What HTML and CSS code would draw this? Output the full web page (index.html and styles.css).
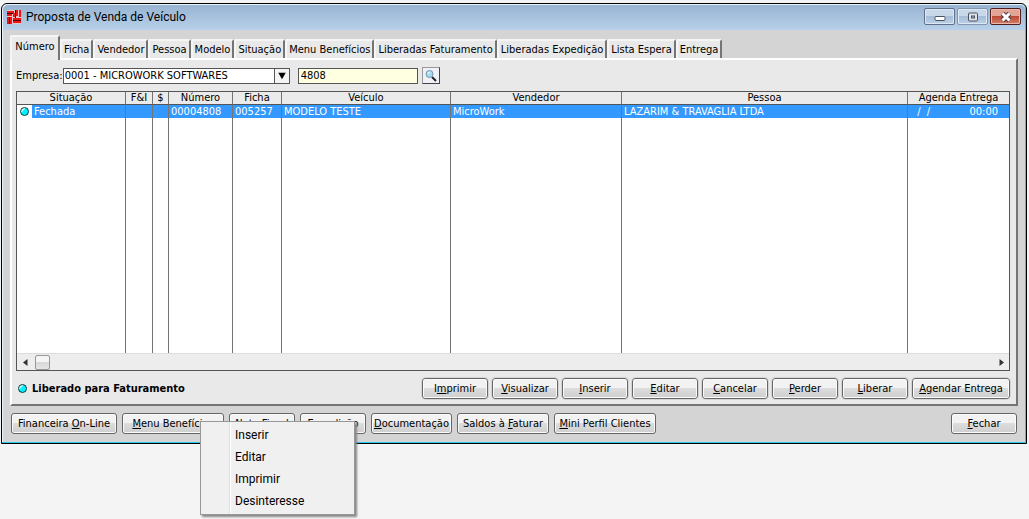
FILE: index.html
```html
<!DOCTYPE html>
<html lang="pt-BR">
<head>
<meta charset="utf-8">
<title>Proposta de Venda de Veículo</title>
<link rel="stylesheet" href="styles.css">
</head>
<body>
<main class="window">
  <header class="titlebar">
    <svg class="logo" viewBox="0 0 14 14" width="14" height="14" aria-hidden="true">
      <path fill="#e9c4c4" d="M0 0h14v14H0z"/>
      <path fill="#4a0808" d="M0 3h8v1H0zM8 0h1v8H8zM2 7h1v7H2zM6 10h8v1H6z"/>
      <path fill="#f01414" d="M0 1h7v2H0zM0 4h5v2H0zM6 3h2v4H6zM9 0h2v6H9zM12 0h2v7h-2zM0 7h2v7H0zM3 7h2v7H3zM6 8h8v2H6zM6 11h8v2H6z"/>
    </svg>
    <h1 class="title">Proposta de Venda de Veículo</h1>
    <div class="caption">
      <button class="cap" type="button" aria-label="Minimizar"><svg width="12" height="10" viewBox="0 0 12 10"><rect x="1" y="4.500" width="10" height="4" rx="1" fill="#fff" stroke="#4a5263"/></svg></button>
      <button class="cap cap-max" type="button" aria-label="Restaurar"><svg width="12" height="10" viewBox="0 0 12 10"><rect x="1.500" y="1" width="9" height="8" rx="1" fill="#dde2ea" stroke="#4a5263"/><rect x="4.500" y="4" width="3" height="2" fill="#a9c0da" stroke="#4a5263"/></svg></button>
      <button class="cap cap-close" type="button" aria-label="Fechar janela"><svg width="12" height="10" viewBox="0 0 12 10"><path d="M2.500 1.500l7 7M9.500 1.500l-7 7" stroke="#4e3c46" stroke-width="5"/><path d="M2.500 1.500l7 7M9.500 1.500l-7 7" stroke="#fff" stroke-width="3"/></svg></button>
    </div>
  </header>
  <div class="body">
    <nav class="tabs" aria-label="Filtros">
      <button class="tab tab-on w50" type="button">Número</button>
      <button class="tab" type="button">Ficha</button>
      <button class="tab" type="button">Vendedor</button>
      <button class="tab" type="button">Pessoa</button>
      <button class="tab" type="button">Modelo</button>
      <button class="tab" type="button">Situação</button>
      <button class="tab" type="button">Menu Benefícios</button>
      <button class="tab" type="button">Liberadas Faturamento</button>
      <button class="tab" type="button">Liberadas Expedição</button>
      <button class="tab" type="button">Lista Espera</button>
      <button class="tab" type="button">Entrega</button>
    </nav>
    <section class="panel">
      <form class="filter">
        <label for="empresa">Empresa:</label>
        <span class="combo">
          <select id="empresa"><option>0001 - MICROWORK SOFTWARES</option></select>
          <svg class="combo-arrow" width="15" height="15" viewBox="0 0 15 15" aria-hidden="true"><path d="M3.500 4h8l-4 7z" fill="#000"/></svg>
        </span>
        <input class="numero" type="text" value="4808" aria-label="Número">
        <button class="search" type="button" aria-label="Pesquisar"><svg width="14" height="14" viewBox="0 0 14 14"><path d="M8 8l4 4" stroke="#222" stroke-width="2"/><circle cx="5.500" cy="5" r="3.500" fill="#9fdcf0" stroke="#7d93a8"/><path d="M4 5a2 2 0 0 1 2-2" stroke="#fff" fill="none"/></svg></button>
      </form>
      <div class="grid">
        <table class="data">
          <colgroup><col class="c1"><col class="c2"><col class="c3"><col class="c4"><col class="c5"><col class="c6"><col class="c7"><col class="c8"><col class="c9"></colgroup>
          <thead><tr><th>Situação</th><th>F&amp;I</th><th>$</th><th>Número</th><th>Ficha</th><th>Veículo</th><th>Vendedor</th><th>Pessoa</th><th>Agenda Entrega</th></tr></thead>
          <tbody>
            <tr class="sel"><td class="state"><div class="state-in"><span class="dotcell"><i class="dot"></i></span>Fechada</div></td><td></td><td></td><td>00004808</td><td>005257</td><td>MODELO TESTE</td><td>MicroWork</td><td>LAZARIM &amp; TRAVAGLIA LTDA</td><td><div class="when"><span>&nbsp;/&nbsp; /</span><span>00:00</span></div></td></tr>
            <tr class="rest"><td></td><td></td><td></td><td></td><td></td><td></td><td></td><td></td><td></td></tr>
          </tbody>
        </table>
        <div class="scroll" aria-hidden="true">
          <svg width="5" height="7" viewBox="0 0 5 7"><path d="M4.500 0v7L0 3.500z" fill="#333"/></svg>
          <span class="thumb"></span>
          <svg class="right" width="5" height="7" viewBox="0 0 5 7"><path d="M.5 0v7L5 3.500z" fill="#333"/></svg>
        </div>
      </div>
      <div class="actions">
        <strong class="legend"><i class="dot"></i>Liberado para Faturamento</strong>
        <button class="btn" type="button">I<u>m</u>primir</button>
        <button class="btn" type="button"><u>V</u>isualizar</button>
        <button class="btn" type="button"><u>I</u>nserir</button>
        <button class="btn" type="button"><u>E</u>ditar</button>
        <button class="btn" type="button"><u>C</u>ancelar</button>
        <button class="btn" type="button"><u>P</u>erder</button>
        <button class="btn" type="button"><u>L</u>iberar</button>
        <button class="btn w98" type="button"><u>A</u>gendar Entrega</button>
      </div>
    </section>
    <footer class="footer">
      <button class="btn w106" type="button">Financeira <u>O</u>n-Line</button>
      <div class="menu-host">
        <button class="btn w102" type="button"><u>M</u>enu Benefícios</button>
        <div class="menu" role="menu">
          <button type="button" role="menuitem">Inserir</button>
          <button type="button" role="menuitem">Editar</button>
          <button type="button" role="menuitem">Imprimir</button>
          <button type="button" role="menuitem">Desinteresse</button>
        </div>
      </div>
      <button class="btn" type="button">Nota Fiscal</button>
      <button class="btn" type="button">Expedição</button>
      <button class="btn w81" type="button"><u>D</u>ocumentação</button>
      <button class="btn w92" type="button">Saldos à <u>F</u>aturar</button>
      <button class="btn w102" type="button"><u>M</u>ini Perfil Clientes</button>
      <button class="btn last" type="button"><u>F</u>echar</button>
    </footer>
  </div>
</main>
</body>
</html>
```
FILE: styles.css
```css
* { box-sizing: border-box; }
body {
  margin: 0;
  min-height: 100vh;
  padding: 3px 2px 0 1px;
  background: #f4f4f4;
  color: #000;
  font: 11px/13px "DejaVu Sans Condensed", "DejaVu Sans", sans-serif;
}
button, input, select { font: inherit; color: inherit; margin: 0; }
button { padding: 0; white-space: nowrap; }
.window {
  border: 1px solid #000;
  border-radius: 6px 6px 0 0;
  background: #d4d4d4;
  box-shadow: inset -1px -1px #27c8ec, inset 1px 1px #e8f4fc;
}
.titlebar {
  display: flex;
  align-items: center;
  gap: 5px;
  height: 25px;
  margin: 1px 1px 0;
  padding: 0 4px 2px;
  border-radius: 5px 5px 0 0;
  background: linear-gradient(#98b4d2, #b8d0e9);
}
.title { flex: 1; margin: 0; font: 12px/16px Roboto, sans-serif; }
.caption { display: flex; gap: 2px; }
.cap {
  display: grid;
  place-items: center;
  width: 31px;
  height: 17px;
  border: 1px solid #5f718a;
  border-radius: 2px;
  background: linear-gradient(#c9d8e9 45%, #a5bdd8 50%, #bdd1e6);
  box-shadow: inset 0 0 0 1px #dce8f4;
}
.cap-max { border-color: #8296b0; }
.cap-close {
  border-color: #521e1e;
  background: linear-gradient(#e3a496 45%, #b94a35 50%, #d58067);
  box-shadow: inset 0 0 0 1px #e9b9ae;
}
.body { padding: 5px 8px 9px; }
.tabs { display: flex; align-items: flex-end; height: 23px; }
.tab {
  height: 19px;
  padding: 0 2px;
  border: 0;
  border-left: 2px solid #f5f5f5;
  border-right: 2px solid #747474;
  border-top: 2px solid #f5f5f5;
  border-radius: 2px 2px 0 0;
  background: #e9e9e9;
}
.tab-on { position: relative; height: 25px; margin-bottom: -2px; padding: 0 0 5px; }
.w50 { width: 50px; }
.panel {
  padding: 7px 6px 5px 4px;
  border: 2px solid #fff;
  border-right-color: #747474;
  border-bottom-color: #747474;
  background: #e9e9e9;
}
.filter { display: flex; align-items: center; height: 17px; margin-bottom: 7px; }
.combo { position: relative; width: 227px; margin-right: 8px; }
.combo select {
  appearance: none;
  display: block;
  width: 100%;
  height: 16px;
  padding: 0 16px 0 1px;
  border: 1px solid #555;
  border-radius: 0;
  background: #fff;
}
.combo-arrow { position: absolute; right: 1px; top: 1px; border-left: 1px solid #555; background: #f4f4f4; height: 14px; }
.numero { width: 120px; height: 16px; padding: 0 2px; border: 1px solid #555; background: #ffffe1; }
.search {
  display: grid;
  place-items: center;
  width: 18px;
  height: 17px;
  margin-left: 4px;
  border: 1px solid #999;
  border-right-color: #444;
  border-bottom-color: #444;
  background: #f0f0f8;
}
.grid { border: 1px solid #555; background: #fff; }
.data { width: 100%; table-layout: fixed; border-collapse: separate; border-spacing: 0; }
.data th, .data td { padding: 0 2px; border-right: 1px solid #747474; white-space: nowrap; overflow: hidden; }
.data th:last-child, .data td:last-child { border-right: 0; }
.data th { height: 13px; border-bottom: 1px solid #555; background: #ebebeb; font-weight: 400; line-height: 12px; }
.sel td { height: 13px; background: #3399ff; color: #fff; line-height: 13px; }
.rest td { height: 235px; }
.c1 { width: 109px; } .c2 { width: 27px; } .c3 { width: 16px; } .c4 { width: 64px; } .c5 { width: 49px; }
.c6 { width: 169px; } .c7 { width: 171px; } .c9 { width: 101px; }
.data .state { padding: 0; }
.state-in { display: flex; }
.dotcell { display: grid; place-items: center; width: 15px; margin-right: 2px; background: #fff; }
.dot {
  display: block;
  width: 9px;
  height: 9px;
  border: 1px solid #003a3a;
  border-radius: 50%;
  background: linear-gradient(135deg, #d8ffff 25%, #00f0ff 40%);
}
.when { display: flex; justify-content: space-between; padding: 0 9px 0 4px; }
.scroll { display: flex; align-items: center; height: 17px; padding: 0 5px 0 6px; background: #ededed; border-top: 1px solid #dcdcdc; }
.thumb { width: 15px; height: 15px; margin-left: 7px; border: 1px solid #979797; border-radius: 2px; background: linear-gradient(#f5f5f5 45%, #d8d8d8 50%, #e5e5e5); }
.right { margin-left: auto; }
.actions { display: flex; gap: 4px; align-items: center; padding-top: 7px; }
.legend { display: flex; align-items: center; gap: 5px; margin-right: auto; padding-left: 2px; }
.btn {
  width: 66px;
  height: 21px;
  border: 1px solid #666;
  border-radius: 3px;
  background: linear-gradient(#f2f2f2 45%, #dcdcdc 50%, #cfcfcf);
  box-shadow: inset 0 0 0 1px #fafafa;
}
.actions .btn { outline: 1px solid #d4d4d4; }
.w98 { width: 98px; } .w106 { width: 106px; } .w102 { width: 102px; } .w81 { width: 81px; } .w92 { width: 92px; }
.footer { display: flex; gap: 5px; padding: 7px 1px 0; }
.last { margin-left: auto; }
.menu-host { position: relative; }
.menu {
  position: absolute;
  left: 78px;
  top: 8px;
  z-index: 1;
  width: 155px;
  padding: 2px;
  border: 1px solid #979797;
  background: linear-gradient(90deg, #f0f0f0 28px, #dedede 28px, #dedede 29px, #fff 29px, #fff 30px, #f0f0f0 30px);
  box-shadow: 2px 2px 2px #888;
}
.menu button { display: block; width: 100%; height: 22px; padding-left: 32px; border: 0; background: none; text-align: left; font: 12px/20px Roboto, sans-serif; }
```
